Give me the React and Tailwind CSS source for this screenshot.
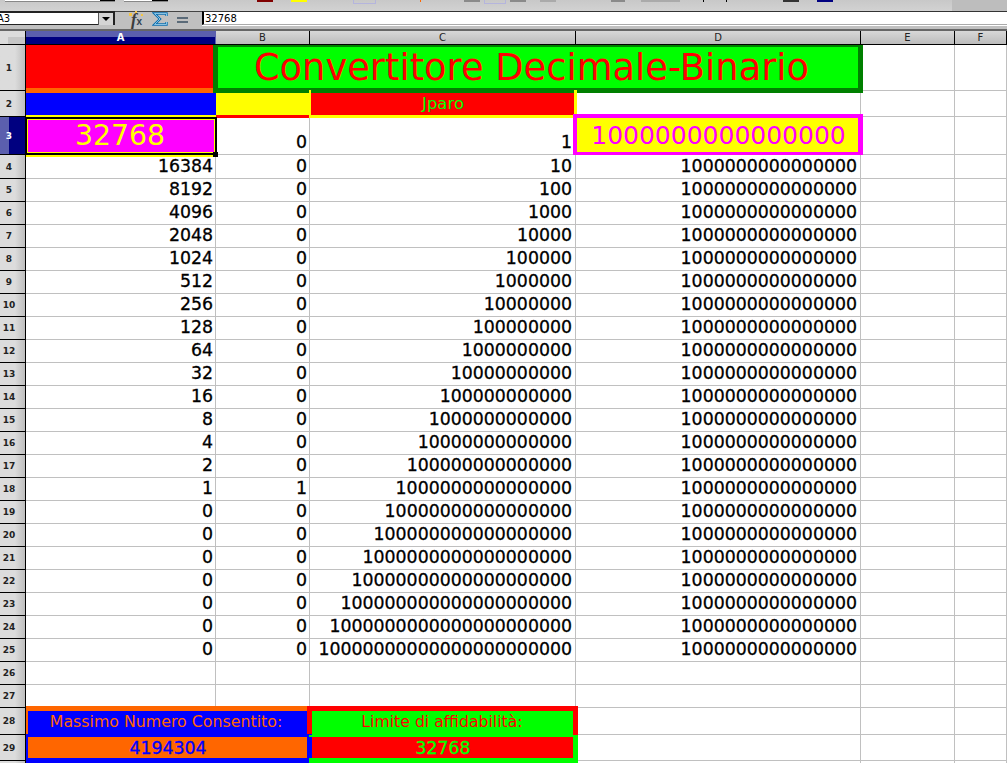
const columns = ['A', 'B', 'C', 'D', 'E', 'F'];

const rowHeights = { 1: 'h-[46px]', 2: 'h-[26px]', 3: 'h-[38px]', 4: 'h-[24px]', 28: 'h-[27px]', 29: 'h-[26px]' };

const colA = [16384, 8192, 4096, 2048, 1024, 512, 256, 128, 64, 32, 16, 8, 4, 2, 1, 0, 0, 0, 0, 0, 0, 0];

// the sheet text looks a bit heavier than regular DejaVu
const strong = '[-webkit-text-stroke:0.3px_currentColor]';

const FX = () => (
  <svg width="16" height="16" viewBox="0 0 16 16" className="shrink-0 overflow-visible">
    <text x="3" y="14" fontFamily="'Liberation Serif', serif" fontStyle="italic" fontWeight="bold" fontSize="17" fill="#3c3c3c">f</text>
    <text x="8.500" y="14" fontFamily="'Liberation Sans', sans-serif" fontWeight="bold" fontSize="10" fill="#2f3f4f">x</text>
    <rect x="1" y="2" width="3" height="3" fill="#f5c542" />
    <rect x="7" y="0" width="2" height="2" fill="#f5c542" />
    <rect x="13" y="3" width="2" height="2" fill="#f5c542" />
  </svg>
);

const Sigma = () => (
  <svg width="16" height="14" viewBox="0 0 16 14" className="shrink-0">
    <path d="M14.500 4V1.500H2.500L8 7l-5.500 5.500h12V10" fill="none" stroke="#0b6fb0" strokeWidth="2.400" />
    <path d="M14.500 4V1.500H2.500L8 7l-5.500 5.500h12V10" fill="none" stroke="#a8d8f0" strokeWidth="0.800" />
  </svg>
);

const EqualSign = () => (
  <svg width="11" height="6" viewBox="0 0 11 6" className="shrink-0">
    <rect width="11" height="2" fill="#5a6a78" />
    <rect y="4" width="11" height="2" fill="#5a6a78" />
  </svg>
);

// thick coloured frame drawn over the neighbouring grid lines
const Frame = ({ className }) => <div className={`absolute pointer-events-none z-10 ${className}`} />;

const Cell = ({ className = '', children }) => (
  <div className={`relative border-r border-b border-[#c0c0c0] min-w-0 flex items-end justify-end pr-[2px] pb-[1px] whitespace-nowrap ${className}`}>
    {children}
  </div>
);

const RowHead = ({ n, selected }) => (
  <div className={`flex shrink-0 items-center justify-center w-[26px] pr-[7px] border-r border-b border-black text-[9px] font-semibold ${rowHeights[n] || 'h-[23px]'} ${selected ? 'bg-gradient-to-r from-[#5b5fae] from-[36%] to-[#000080] to-[36%] text-white' : 'bg-gradient-to-r from-[#dcdcdc] from-[60%] to-[#bebebe] text-[#222]'}`}>
    {n}
  </div>
);

const Row = ({ n, label = n, selected, children }) => (
  <div className={`flex ${rowHeights[n] || 'h-[23px]'}`}>
    <RowHead n={label} selected={selected} />
    {children}
  </div>
);

const Tail = () => (
  <>
    <Cell className="w-[94px]" />
    <Cell className="flex-1" />
  </>
);

export default function App() {
  return (
    <div className="w-[1007px] h-[763px] overflow-hidden bg-white text-black font-['DejaVu_Sans',sans-serif]">
      {/* clipped toolbar */}
      <div className="flex items-start h-[12px] pl-[5px] bg-gradient-to-b from-[#c8c8c8] to-[#d2d2d2] border-b border-[#444]">
        <div className="flex justify-end w-[110px] h-[2px] bg-white border-b border-[#888]"><div className="w-[15px] h-[1px] bg-black" /></div>
        <div className="flex justify-end ml-[9px] w-[44px] h-[2px] bg-white border-b border-[#888]"><div className="w-[16px] h-[1px] bg-black" /></div>
        <div className="ml-[89px] w-[16px] h-[2px] bg-[#800000]" />
        <div className="ml-[18px] w-[16px] h-[2px] bg-[#ffff00]" />
        <div className="ml-[46px] w-[23px] h-[4px] border-b border-x border-[#b5b5dd]" />
        <div className="ml-[44px] w-[1px] h-[2px] bg-[#ff6600]" />
        <div className="ml-[43px] w-[16px] h-[2px] bg-[#8a8a8a]" />
        <div className="ml-[4px] w-[22px] h-[4px] border-b border-x border-[#b5b5dd]" />
        <div className="ml-[4px] w-[16px] h-[2px] bg-[#8a8a8a]" />
        <div className="ml-[14px] w-[16px] h-[2px] bg-[#aaaaaa]" />
        <div className="ml-[55px] w-[14px] h-[2px] bg-[#8a8a8a]" />
        <div className="ml-[16px] w-[39px] h-[2px] bg-[#aaaaaa]" />
        <div className="ml-[23px] w-[1px] h-[2px] bg-black" />
        <div className="ml-[22px] w-[1px] h-[2px] bg-black" />
        <div className="ml-[56px] w-[16px] h-[2px] bg-[#333]" />
        <div className="ml-[18px] w-[16px] h-[2px] bg-[#000080]" />
        <div className="ml-auto w-[55px] h-full bg-[#bdbdbd]" />
      </div>

      {/* formula bar */}
      <div className="flex items-start h-[19px] bg-[#c0c0c0] border-b-2 border-[#666]">
        <div className="flex items-center justify-between w-[116px] h-[14px] -ml-[1px] -mt-[1px] bg-white border-t-2 border-r-2 border-b border-[#222] text-[10px]">
          <span className="-ml-[2px]">A3</span>
          <div className="flex items-center justify-center w-[15px] h-[12px] bg-[#d4d4d4] border-l border-[#555]">
            <div className="w-0 h-0 border-x-[4px] border-x-transparent border-t-[4px] border-t-black" />
          </div>
        </div>
        <div className="ml-[13px] -mt-[1px]"><FX /></div>
        <div className="ml-[8px]"><Sigma /></div>
        <div className="ml-[9px] mt-[5px]"><EqualSign /></div>
        <div className="flex items-center ml-[14px] flex-1 h-[14px] -mt-[1px] bg-white border-l-2 border-t border-b border-l-black border-t-[#333] border-b-[#aaa] pl-[1px] text-[10px] shadow-[0_1px_0_white]">32768</div>
      </div>

      {/* column headers */}
      <div className="flex h-[14px] border-b border-black text-[10px]">
        <div className="flex items-end justify-end w-[26px] shrink-0 bg-[#dcdcdc] border-r border-black">
          <div className="w-[17px] h-[7px] bg-[#c6c6c6]" />
        </div>
        {columns.map((c) => (
          <div
            key={c}
            className={`flex items-center justify-center border-r ${
              c === 'A'
                ? 'w-[190px] border-[#5b5fae] bg-gradient-to-b from-[#5b5fae] from-50% to-[#000080] to-50% text-white font-bold'
                : 'border-black bg-gradient-to-b from-[#d8d8d8] to-[#bcbcbc] text-[#222] ' +
                  (c === 'B' ? 'w-[94px]' : c === 'C' ? 'w-[266px]' : c === 'D' ? 'w-[285px]' : c === 'E' ? 'w-[94px]' : 'flex-1')
            }`}
          >
            {c}
          </div>
        ))}
      </div>

      {/* sheet */}
      <div className="text-[17.33px] leading-[22px]">
        <Row n={1}>
          <Cell className="w-[190px] bg-[#ff0000] !border-0">
            <Frame className="left-0 right-0 -bottom-[2px] h-[5px] bg-[#ff6600]" />
          </Cell>
          <Cell className="w-[645px] bg-[#00ff00] !justify-center !items-center !pr-[14px] !border-0 text-[#ff0000] text-[36.8px]">
            <Frame className="-left-[3px] -right-[2px] top-0 -bottom-[2px] border-x-[5px] border-b-[5px] border-t-2 border-[#008000]" />
            Convertitore Decimale-Binario
          </Cell>
          <Tail />
        </Row>

        <Row n={2}>
          <Cell className="w-[190px] bg-[#0000ff] !border-0">
            <Frame className="left-0 right-0 -bottom-[1px] h-[3px] bg-[#ffff00]" />
          </Cell>
          <Cell className="w-[94px] bg-[#ffff00] !border-0">
            <Frame className="left-0 right-0 -bottom-[1px] h-[3px] bg-[#ff0000]" />
          </Cell>
          <Cell className="w-[266px] bg-[#ff0000] !justify-center !items-center !pr-0 !border-0 text-[#00ff00] text-[16.5px]">
            Jparo
            <Frame className="left-0 -right-[1px] -bottom-[1px] h-[3px] bg-[#ffff00]" />
            <Frame className="-left-[1px] -top-[1px] -bottom-[1px] w-[2px] bg-[#ffff00]" />
            <Frame className="-right-[1px] -top-[1px] -bottom-[1px] w-[3px] bg-[#ffff00]" />
          </Cell>
          <Cell className="w-[285px]" />
          <Tail />
        </Row>

        <Row n={3} selected>
          <Cell className="w-[190px] bg-[#ff00ff] !justify-center !items-center !pr-[2px] !border-0 text-[#ffff00] text-[28.3px]">
            <Frame className="left-0 right-0 -top-[1px] -bottom-[2px] border-t border-b-2 border-[#ffff00]" />
            <Frame className="-left-[1px] -right-[1px] top-0 bottom-0 border-2 border-black" />
            <Frame className="left-[1px] right-[1px] top-[2px] bottom-[2px] border border-[#ffff00]" />
            <Frame className="-right-[2px] -bottom-[2px] w-[5px] h-[5px] bg-black" />
            32768
          </Cell>
          <Cell className={`w-[94px] ${strong}`}>0</Cell>
          <Cell className={`w-[266px] !pr-[3px] ${strong}`}>1</Cell>
          <Cell className="w-[285px] bg-[#ffff00] !justify-center !items-center !pr-0 !border-0 text-[#ff00ff] text-[25px]">
            <Frame className="-left-[3px] -right-[2px] -top-[3px] bottom-0 border-l-4 border-r-[5px] border-t-4 border-b-[3px] border-[#ff00ff]" />
            1000000000000000
          </Cell>
          <Tail />
        </Row>

        {colA.map((value, i) => {
          const n = i + 4;
          return (
            <Row key={n} n={n}>
              <Cell className={`w-[190px] ${strong}`}>{value}</Cell>
              <Cell className={`w-[94px] ${strong}`}>{n === 18 ? 1 : 0}</Cell>
              <Cell className={`w-[266px] !pr-[3px] ${strong}`}>{'1' + '0'.repeat(n - 3)}</Cell>
              <Cell className={`w-[285px] !pr-[3px] ${strong}`}>1000000000000000</Cell>
              <Tail />
            </Row>
          );
        })}

        {[26, 27].map((n) => (
          <Row key={n} n={n}>
            <Cell className="w-[190px]" />
            <Cell className="w-[94px]" />
            <Cell className="w-[266px]" />
            <Cell className="w-[285px]" />
            <Tail />
          </Row>
        ))}

        <Row n={28}>
          <Cell className="w-[284px] bg-[#0000ff] !justify-center !items-center !pr-[4px] pt-[2px] !border-0 text-[#ff6600] text-[15.8px]">
            <Frame className="inset-x-0 -top-[2px] h-[5px] bg-[#ff6600]" />
            <Frame className="left-0 top-0 bottom-0 w-[2px] bg-[#ff6600]" />
            Massimo Numero Consentito:
          </Cell>
          <Cell className="w-[266px] bg-[#00ff00] !justify-center !items-center !pr-[2px] pt-[2px] !border-0 text-[#ff0000] text-[15.7px]">
            <Frame className="-left-[3px] -right-[2px] -top-[2px] bottom-0 border-x-[5px] border-t-[5px] border-[#ff0000]" />
            Limite di affidabilità:
          </Cell>
          <Cell className="w-[285px]" />
          <Tail />
        </Row>

        <Row n={29}>
          <Cell className={`w-[284px] bg-[#ff6600] !justify-center !items-center !pr-0 !border-0 text-[#0000ff] ${strong}`}>
            <Frame className="left-0 -right-[2px] -top-[1px] -bottom-[2px] border-l-2 border-r-[5px] border-t-[3px] border-b-[5px] border-[#0000ff]" />
            4194304
          </Cell>
          <Cell className={`w-[266px] bg-[#ff0000] !justify-center !items-center !pr-0 !border-0 text-[#00ff00] ${strong}`}>
            <Frame className="-left-[1px] -right-[2px] top-0 -bottom-[2px] border-r-[5px] border-t-2 border-b-[5px] border-[#00ff00]" />
            32768
          </Cell>
          <Cell className="w-[285px]" />
          <Tail />
        </Row>

        {/* only the top of row 30 is visible, its number falls below the window */}
        <Row n={30} label="">
          <Cell className="w-[190px] !border-b-0" />
          <Cell className="w-[94px] !border-b-0" />
          <Cell className="w-[266px] !border-b-0" />
          <Cell className="w-[285px] !border-b-0" />
          <Tail />
        </Row>
      </div>
    </div>
  );
}
